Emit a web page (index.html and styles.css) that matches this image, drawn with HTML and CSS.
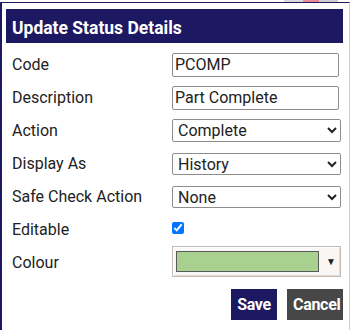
FILE: index.html
```html
<!DOCTYPE html>
<html>
<head>
<meta charset="utf-8">
<link rel="stylesheet" href="styles.css">
</head>
<body>
<div class="behind"></div>
<div class="dialog">
  <div class="title">Update Status Details</div>
  <div class="form">
    <label class="lbl">Code</label>
    <div class="ctl"><input class="txt" type="text" value="PCOMP"></div>
    <label class="lbl">Description</label>
    <div class="ctl"><input class="txt" type="text" value="Part Complete"></div>
    <label class="lbl">Action</label>
    <div class="ctl"><select class="sel"><option>Complete</option></select></div>
    <label class="lbl">Display As</label>
    <div class="ctl"><select class="sel sel-sm"><option>History</option></select></div>
    <label class="lbl">Safe Check Action</label>
    <div class="ctl"><select class="sel sel-sm"><option>None</option></select></div>
    <label class="lbl">Editable</label>
    <div class="ctl"><input class="chk" type="checkbox" checked></div>
    <label class="lbl">Colour</label>
    <div class="ctl">
      <div class="colour">
        <span class="swatch"></span>
        <span class="arrow">▼</span>
      </div>
    </div>
  </div>
  <div class="actions">
    <button class="btn save">Save</button>
    <button class="btn cancel">Cancel</button>
  </div>
</div>
</body>
</html>
```
FILE: styles.css
```css
html, body {
  margin: 0;
  padding: 0;
  background: #ffffff;
  width: 352px;
  height: 330px;
  overflow: hidden;
}

.behind {
  position: absolute;
  top: 0;
  left: 284px;
  width: 54px;
  height: 2px;
  background: linear-gradient(to right, #d8d8d8 0, #d8d8d8 35%, #e88a94 35%, #e88a94 65%, #d0d0d0 65%);
}

.dialog {
  margin-top: 2px;
  height: 340px;
  border-top: 1px solid #1d1862;
  border-left: 2px solid #1d1862;
  border-right: 1px solid #cfcbe0;
  padding: 6px 6px 0 4px;
  box-sizing: border-box;
  width: 350px;
  font-family: Roboto, "Liberation Sans", sans-serif;
  color: #222222;
}

.title {
  background: #1d1862;
  color: #ffffff;
  font-weight: 700;
  font-size: 17.5px;
  height: 34px;
  line-height: 34px;
  padding: 2px 0 0 6px;
  box-sizing: border-box;
}

.form {
  display: grid;
  grid-template-columns: 160px 169px;
  grid-auto-rows: 33px;
  padding: 5px 0 0 6px;
  align-items: center;
}

.lbl {
  font-size: 16px;
  line-height: 20px;
  color: #222222;
}

.ctl {
  display: flex;
  align-items: center;
}

.txt {
  width: 167px;
  height: 24px;
  box-sizing: border-box;
  border: 1px solid #8d8d8d;
  border-radius: 2px;
  padding: 0 2px;
  font-family: Roboto, "Liberation Sans", sans-serif;
  font-size: 16px;
  color: #222222;
  outline: none;
}

.sel {
  width: 169px;
  height: 23px;
  box-sizing: border-box;
  border: 1px solid #8d8d8d;
  border-radius: 2px;
  padding: 0 0 0 1px;
  font-family: Roboto, "Liberation Sans", sans-serif;
  font-size: 16px;
  color: #222222;
  background: #ffffff;
}

.sel-sm {
  height: 22px;
}

.chk {
  margin: 0;
  width: 12px;
  height: 12px;
  position: relative;
  top: -2px;
}

.colour {
  width: 169px;
  height: 31px;
  box-sizing: border-box;
  border: 1px solid #c4bcb4;
  box-shadow: inset 1px 1px 0 #ffffff, inset -1px -1px 0 #e2ddd8;
  background: #f8f7f6;
  display: flex;
  align-items: center;
  padding: 0 0 0 3px;
  position: relative;
  top: -1px;
}

.swatch {
  display: block;
  width: 143px;
  height: 21px;
  box-sizing: border-box;
  background: #a9d08e;
  border: 1px solid #5a5a5a;
}

.arrow {
  font-size: 10px;
  color: #222222;
  margin-left: 7px;
  line-height: 10px;
}

.actions {
  display: flex;
  justify-content: flex-end;
  gap: 10px;
  padding: 10px 0 0 0;
}

.btn {
  height: 31px;
  border: none;
  border-radius: 0;
  color: #ffffff;
  font-family: Roboto, "Liberation Sans", sans-serif;
  font-weight: 700;
  font-size: 16px;
  letter-spacing: -0.3px;
  padding: 0 6px;
}

.save {
  background: #1d1862;
  width: 46px;
}

.cancel {
  background: #474747;
  width: 56px;
}
```
